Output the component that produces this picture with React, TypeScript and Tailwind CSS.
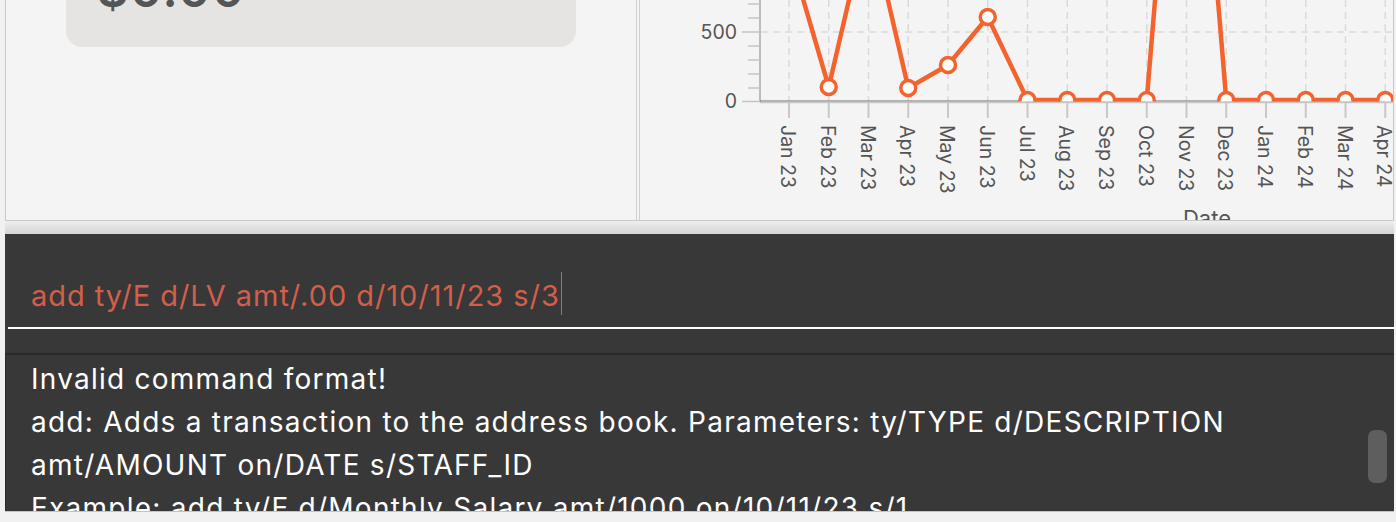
const months = [
  "Jan 23", "Feb 23", "Mar 23", "Apr 23", "May 23", "Jun 23", "Jul 23", "Aug 23",
  "Sep 23", "Oct 23", "Nov 23", "Dec 23", "Jan 24", "Feb 24", "Mar 24", "Apr 24",
]

// y position of each data point inside the plot (0 line sits at y=100)
const points = [-49, 87, -84, 88, 65, 17, 100, 100, 100, 100, -380, 100, 100, 100, 100, 100]

const mx = (i: number) => 149 + i * 39.75

function ExpenseChart() {
  const path = points.map((y, i) => `${i === 0 ? "M" : "L"}${mx(i)} ${y}`).join(" ")
  return (
    <svg width="753" height="220" viewBox="0 0 753 220" className="block">
      <defs>
        <clipPath id="plot">
          <rect x="121" y="-10" width="640" height="111.5" />
        </clipPath>
      </defs>

      {/* grid */}
      <line x1="121" y1="32" x2="753" y2="32" stroke="#dadada" strokeWidth="1.5" strokeDasharray="7 5" />
      {months.map((_, i) => (
        <line key={i} x1={mx(i)} y1="0" x2={mx(i)} y2="101" stroke="#dadada" strokeWidth="1.5" strokeDasharray="7 5" />
      ))}

      {/* y axis */}
      <line x1="120" y1="0" x2="120" y2="102" stroke="#bcbcbc" strokeWidth="2" />
      {[4, 18, 46, 60, 74, 88].map((y) => (
        <line key={y} x1="108" y1={y} x2="120" y2={y} stroke="#c4c4c4" strokeWidth="1.5" />
      ))}
      <line x1="102" y1="32" x2="120" y2="32" stroke="#c4c4c4" strokeWidth="1.5" />
      <line x1="102" y1="101.5" x2="120" y2="101.5" stroke="#c4c4c4" strokeWidth="1.5" />
      <text x="97" y="32" textAnchor="end" dominantBaseline="central" fontSize="19.5" fill="#555">500</text>
      <text x="97" y="101" textAnchor="end" dominantBaseline="central" fontSize="19.5" fill="#555">0</text>

      {/* x axis */}
      <line x1="120" y1="101" x2="753" y2="101" stroke="#6e6e6e" strokeWidth="1.2" />
      <line x1="120" y1="102.5" x2="753" y2="102.5" stroke="#c6c6c6" strokeWidth="1.5" />
      {months.map((m, i) => (
        <g key={m}>
          <line x1={mx(i)} y1="103" x2={mx(i)} y2="118" stroke="#c8c8c8" strokeWidth="2" />
          <text
            transform={`translate(${mx(i) - 1} 125) rotate(90)`}
            dominantBaseline="central"
            fontSize="19.5"
            fill="#555"
          >
            {m}
          </text>
        </g>
      ))}
      <text x="567" y="226" textAnchor="middle" fontSize="22" fill="#555">Date</text>

      {/* series */}
      <g clipPath="url(#plot)">
        <path d={path} fill="none" stroke="#f4632e" strokeWidth="4.5" strokeLinejoin="round" />
        {points.map((y, i) => (
          <circle key={i} cx={mx(i)} cy={y} r="7.5" fill="#fff" stroke="#f4632e" strokeWidth="3.5" />
        ))}
      </g>
    </svg>
  )
}

export default function App() {
  return (
    <div
      className="w-[1396px] h-[522px] overflow-hidden bg-[#f1f1f1] flex flex-col pl-[5px] pr-[2px]"
      style={{ fontFamily: "Inter, 'Noto Sans', sans-serif" }}
    >
      {/* summary + chart */}
      <div className="h-[221px] shrink-0 flex bg-[#f4f4f4] border-l border-r border-b border-[#c8c8c8]">
        <div className="w-[631px] shrink-0 border-r border-[#cfcfcf] overflow-hidden">
          <div className="ml-[60px] w-[510px] h-[110px] mt-[-63px] rounded-b-[16px] bg-[#e5e4e2] pl-[31px] pt-[29px]">
            <div className="text-[48px] leading-none font-semibold text-[#555555] tracking-[2px]">$0.00</div>
          </div>
        </div>
        <div className="w-[2px] shrink-0" />
        <div className="flex-1 border-l border-[#cfcfcf] overflow-hidden">
          <ExpenseChart />
        </div>
      </div>

      <div className="h-[13px] shrink-0 bg-gradient-to-b from-[#efefef] to-[#d4d4d4]" />

      {/* command box */}
      <div className="h-[119px] shrink-0 bg-[#383838] pl-[3px]">
        <div className="mt-[36px] pl-[23px] pb-[5px] border-b-2 border-white">
          <div className="text-[29px] leading-[52px] tracking-[0.95px] text-[#d35f4a] whitespace-nowrap">
            add ty/E d/LV amt/.00 d/10/11/23 s/3
            <span className="inline-block w-[1px] h-[43px] bg-[#d35f4a] align-[-9px] ml-[1px]" />
          </div>
        </div>
      </div>

      {/* result display */}
      <div className="relative h-[158px] shrink-0 bg-[#383838] border-t-2 border-l border-[#2a2a2a] overflow-hidden pt-[3px] pl-[25px]">
        <div className="text-[28px] leading-[43px] tracking-[1.25px] text-white whitespace-nowrap">
          <div>Invalid command format!</div>
          <div>add: Adds a transaction to the address book. Parameters: ty/TYPE d/DESCRIPTION</div>
          <div>amt/AMOUNT on/DATE s/STAFF_ID</div>
          <div>Example: add ty/E d/Monthly Salary amt/1000 on/10/11/23 s/1</div>
        </div>
        <div className="absolute left-[1362px] top-[75px] w-[19px] h-[53px] rounded-[7px] bg-[#5e5e5e]" />
      </div>

      <div className="flex-1 border-t border-[#c4c4c4] bg-[#f1f1f1]" />
    </div>
  )
}
